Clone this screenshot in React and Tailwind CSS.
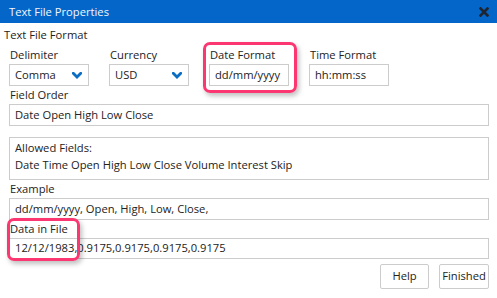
import React from "react";

function Chevron() {
  return (
    <svg width="10" height="7" viewBox="0 0 10 7" className="shrink-0">
      <path d="M1.3 1.3 L5 5 L8.7 1.3" fill="none" stroke="#0a6fc2" strokeWidth="2.8" strokeLinecap="square" />
    </svg>
  );
}

function Select({ value }) {
  return (
    <div className="w-[80px] h-[22px] border border-[#cccccc] flex items-center justify-between pl-[5px] pr-[6px] text-[11.2px] text-[#222]">
      <span>{value}</span>
      <Chevron />
    </div>
  );
}

function Input({ value, w = "w-[80px]", h = "h-[22px]" }) {
  return (
    <div className={`${w} ${h} border border-[#cccccc] flex items-center pl-[5px] text-[11.2px] text-[#222] whitespace-nowrap`}>
      {value}
    </div>
  );
}

function Field({ label, children }) {
  return (
    <div className="flex flex-col w-[80px]">
      <div className="h-[17px] pl-[1px] text-[11.2px] leading-[16px] text-[#222]">{label}</div>
      {children}
    </div>
  );
}

export default function App() {
  return (
    <div
      className="w-[497px] h-[298px] bg-white relative overflow-hidden"
      style={{ fontFamily: '"Open Sans", "Liberation Sans", sans-serif' }}
    >
      <div className="h-[23px] bg-[#0566c9] flex items-center justify-between pl-[9px] pr-[8px]">
        <span className="text-[11.2px] text-[#f2f6fb] leading-none">Text File Properties</span>
        <svg width="10" height="10" viewBox="0 0 10 10">
          <path d="M1.5 1.5 L8.5 8.5 M8.5 1.5 L1.5 8.5" stroke="#1e2530" strokeWidth="2.6" strokeLinecap="square" />
        </svg>
      </div>

      <div className="pl-[4px] mt-[4px] h-[16px] text-[11.2px] leading-[16px] text-[#222]">Text File Format</div>

      <div className="pl-[9px] pt-[4px] flex flex-col">
        <div className="flex gap-[20px]">
          <Field label="Delimiter">
            <Select value="Comma" />
          </Field>
          <Field label="Currency">
            <Select value="USD" />
          </Field>
          <Field label="Date Format">
            <Input value="dd/mm/yyyy" />
          </Field>
          <Field label="Time Format">
            <Input value="hh:mm:ss" />
          </Field>
        </div>

        <div className="h-[18px] pl-[1px] text-[11.2px] leading-[18px] text-[#222]">Field Order</div>
        <Input value="Date Open High Low Close" w="w-[480px]" />

        <div className="mt-[11px] w-[480px] h-[43px] border border-[#cccccc] pl-[5px] pt-[1px] text-[11.2px] leading-[17px] text-[#222]">
          <div>Allowed Fields:</div>
          <div>Date Time Open High Low Close Volume Interest Skip</div>
        </div>

        <div className="h-[18px] pl-[1px] text-[11.2px] leading-[18px] text-[#222]">Example</div>
        <Input value="dd/mm/yyyy, Open, High, Low, Close," w="w-[480px]" />

        <div className="h-[18px] pl-[1px] text-[11.2px] leading-[18px] text-[#222]">Data in File</div>
        <Input value="12/12/1983,0.9175,0.9175,0.9175,0.9175" w="w-[480px]" h="h-[21px]" />

        <div className="flex justify-end gap-[10px] mt-[5px] w-[480px]">
          <button className="w-[49px] h-[25px] border border-[#cccccc] rounded-[2px] bg-white text-[11.2px] text-[#222]">Help</button>
          <button className="w-[50px] h-[25px] border border-[#cccccc] rounded-[2px] bg-white text-[11.2px] text-[#222]">Finished</button>
        </div>
      </div>

      <div className="absolute left-[203px] top-[42px] w-[94px] h-[51px] border-[3px] border-[#fb3670] rounded-[7px] shadow-[2px_3px_5px_rgba(0,0,0,0.25)] pointer-events-none" />
      <div className="absolute left-[7px] top-[218px] w-[73px] h-[43px] border-[3px] border-[#fb3670] rounded-[7px] shadow-[2px_3px_5px_rgba(0,0,0,0.25)] pointer-events-none" />
    </div>
  );
}
